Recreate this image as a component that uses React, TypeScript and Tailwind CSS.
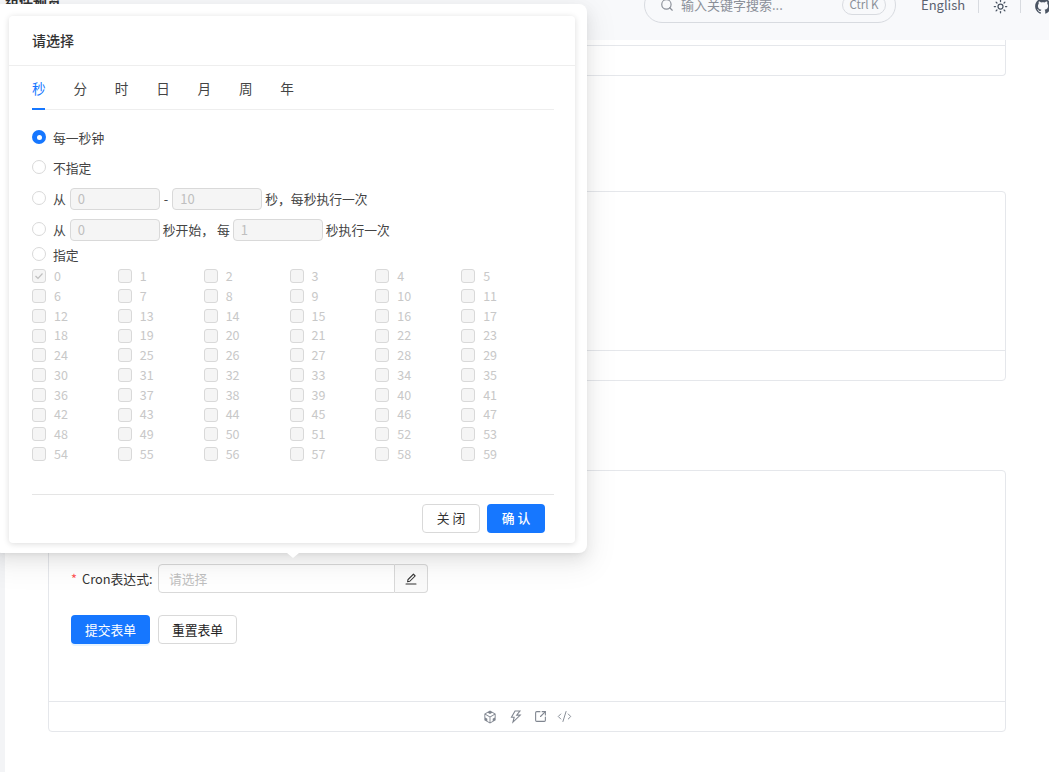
import { Search, Sun, SquareArrowOutUpRight, CodeXml } from "lucide-react";
import { AiOutlineCodeSandbox, AiOutlineThunderbolt, AiFillGithub, AiOutlineEdit } from "react-icons/ai";

const tabs = ["秒", "分", "时", "日", "月", "周", "年"];
const seconds = Array.from({ length: 60 }, (_, i) => i);

function Radio({ checked = false, lift = "-mt-[2px]" }: { checked?: boolean; lift?: string }) {
  if (checked) {
    return (
      <span className={`w-[14px] h-[14px] rounded-full bg-[#1677ff] flex items-center justify-center shrink-0 ${lift}`}>
        <span className="w-[5px] h-[5px] rounded-full bg-white" />
      </span>
    );
  }
  return <span className={`w-[14px] h-[14px] rounded-full border border-[#d9d9d9] bg-white shrink-0 ${lift}`} />;
}

function NumInput({ value }: { value: string }) {
  return (
    <span className="w-[90px] h-[22px] flex items-center px-[7px] rounded-[4px] border border-[#d9d9d9] bg-[#f5f5f5] text-[13px] text-[#bfbfbf]">
      {value}
    </span>
  );
}

function FooterIcons() {
  return (
    <div className="h-[30px] border-t border-[#e5e7eb] flex items-center justify-center gap-[10px] text-[#808690]">
      <AiOutlineCodeSandbox size={16} />
      <AiOutlineThunderbolt size={16} />
      <SquareArrowOutUpRight size={13} />
      <CodeXml size={15} strokeWidth={1.5} />
    </div>
  );
}

export default function App() {
  return (
    <div
      className="relative h-[772px] overflow-hidden bg-white text-[12.8px] text-[#333]"
      style={{ fontFamily: '"Noto Sans CJK SC", "Noto Sans", sans-serif' }}
    >
      {/* left rail */}
      <div className="absolute left-0 top-0 bottom-0 w-[5px] bg-[#f3f4f6]" />

      {/* page cards */}
      <main className="pl-[48px] w-[1006px]">
        <div className="h-[76px] border border-t-0 border-[#e5e7eb] rounded-b-[4px] flex flex-col justify-end">
          <div className="h-[30px] border-t border-[#e5e7eb]" />
        </div>
        <div className="mt-[115px] h-[190px] border border-[#e5e7eb] rounded-[4px] flex flex-col justify-end">
          <div className="h-[30px] border-t border-[#e5e7eb]" />
        </div>
        <div className="mt-[89px] h-[262px] border border-[#e5e7eb] rounded-[4px] flex flex-col">
          <div className="flex-1 pl-[22px] pt-[93px]">
            <div className="flex items-center h-[29px]">
              <span className="w-[87px] text-[#333] whitespace-nowrap">
                <span className="text-[#ff4d4f] mr-[5px]">*</span>Cron表达式:
              </span>
              <div className="flex w-[270px] h-[29px]">
                <span className="flex-1 flex items-center px-[10px] border border-[#d9d9d9] rounded-l-[4px] text-[#bfbfbf]">
                  请选择
                </span>
                <span className="w-[33px] flex items-center justify-center border border-l-0 border-[#d9d9d9] rounded-r-[4px] bg-[#fafafa] text-[#333]">
                  <AiOutlineEdit size={14} />
                </span>
              </div>
            </div>
            <div className="flex gap-[8px] mt-[22px]">
              <button className="w-[79px] h-[29px] rounded-[4px] bg-[#1677ff] text-white shadow-[0_2px_0_rgba(5,145,255,0.1)]">
                提交表单
              </button>
              <button className="w-[79px] h-[29px] rounded-[4px] border border-[#d9d9d9] bg-white text-[#222]">
                重置表单
              </button>
            </div>
          </div>
          <FooterIcons />
        </div>
      </main>

      {/* top nav */}
      <header className="absolute left-0 right-0 top-0 h-[40px] bg-[#f8f9fb] flex items-start overflow-hidden">
        <div className="pl-[5px] -mt-[9px] text-[14px] font-bold text-[#333] whitespace-nowrap w-[644px] shrink-0">组件预览</div>
        <div className="-mt-[13px] w-[252px] h-[36px] rounded-full border border-[#d8dbe0] flex items-center pl-[15px] pr-[9px] text-[#8b9099] shrink-0">
          <Search size={14} />
          <span className="ml-[7px] flex-1 text-[13px]">输入关键字搜索...</span>
          <span className="w-[44px] h-[20px] rounded-full border border-[#d8dbe0] flex items-center justify-center text-[11.5px]">
            Ctrl K
          </span>
        </div>
        <span className="ml-[25px] -mt-[5px] text-[13px] text-[#5b6270] shrink-0">English</span>
        <span className="ml-[13px] w-px h-[13px] bg-[#d8dbe0] shrink-0" />
        <Sun size={15} className="ml-[14px] mt-[-1px] text-[#4b5563] shrink-0" />
        <span className="ml-[12px] w-px h-[13px] bg-[#d8dbe0] shrink-0" />
        <AiFillGithub size={18} className="ml-[13px] -mt-[3px] text-[#4b5563] shrink-0" />
      </header>

      {/* popover */}
      <div className="absolute left-[-6px] top-[4px] w-[593px] h-[549px] bg-white rounded-[8px] shadow-[0_6px_16px_rgba(0,0,0,0.08),0_3px_6px_-4px_rgba(0,0,0,0.12),0_9px_28px_8px_rgba(0,0,0,0.05)] pl-[15px] pr-[12px] pt-[12px]">
        <div className="w-[566px] h-[527px] rounded-[4px] bg-white shadow-[0_1px_6px_rgba(0,0,0,0.14)] flex flex-col">
          <div className="h-[50px] border-b border-[#eeeeee] flex items-center pl-[23px] text-[14px] font-medium text-[#333]">
            请选择
          </div>
          <div className="px-[23px]">
            <div className="flex gap-[27.8px] h-[44px] pt-[2px] items-center border-b border-[#eeeeee] w-[522px] relative text-[13.6px] text-[#444]">
              {tabs.map((t, i) => (
                <span key={t} className={i === 0 ? "text-[#1677ff]" : ""}>
                  {t}
                </span>
              ))}
              <span className="absolute left-0 bottom-[-1px] w-[13px] h-[2px] bg-[#1677ff]" />
            </div>

            <div className="mt-[13px] flex flex-col text-[#444]">
              <div className="h-[30px] flex items-center gap-[7px]">
                <Radio checked />
                <span>每一秒钟</span>
              </div>
              <div className="h-[30px] flex items-center gap-[7px]">
                <Radio />
                <span>不指定</span>
              </div>
              <div className="h-[31px] pt-[5px] pb-[4px] flex items-center">
                <Radio lift="-mt-[3px]" />
                <span className="ml-[7px]">从</span>
                <span className="ml-[4px]"><NumInput value="0" /></span>
                <span className="mx-[4px]">-</span>
                <NumInput value="10" />
                <span className="ml-[3px]">秒，每秒执行一次</span>
              </div>
              <div className="h-[29px] pt-[5px] pb-[2px] flex items-center">
                <Radio lift="-mt-[3px]" />
                <span className="ml-[7px]">从</span>
                <span className="ml-[4px]"><NumInput value="0" /></span>
                <span className="ml-[3px]">秒开始，</span>
                <span className="ml-[3px]">每</span>
                <span className="ml-[3px]"><NumInput value="1" /></span>
                <span className="ml-[3px]">秒执行一次</span>
              </div>
              <div className="h-[22px] pt-[2px] flex items-center gap-[7px]">
                <Radio />
                <span>指定</span>
              </div>
            </div>

            <div className="grid grid-cols-6 w-[515px] mt-[1.5px]">
              {seconds.map((n) => (
                <div key={n} className="h-[19.75px] flex items-center text-[12.5px] text-[#c8c8c8]">
                  <span className="w-[14px] h-[14px] rounded-[3px] border border-[#d9d9d9] bg-[#f5f5f5] flex items-center justify-center">
                    {n === 0 && (
                      <svg width="10" height="10" viewBox="0 0 10 10" fill="none" stroke="#bfbfbf" strokeWidth="1.2">
                        <path d="M1.5 5l2.5 2.5 4.5-5" />
                      </svg>
                    )}
                  </span>
                  <span className="ml-[8px]">{n}</span>
                </div>
              ))}
            </div>

            <div className="mt-[29.5px] border-t border-[#e5e5e5] w-[522px] pt-[9px] pr-[9px] flex justify-end gap-[7px]">
              <button className="w-[58px] h-[29px] pl-[3px] rounded-[4px] border border-[#d9d9d9] bg-white tracking-[3px] text-[#333]">
                关闭
              </button>
              <button className="w-[58px] h-[29px] pl-[3px] rounded-[4px] bg-[#1677ff] text-white font-medium tracking-[3px]">
                确认
              </button>
            </div>
          </div>
        </div>
        {/* arrow */}
        <span className="absolute left-[293px] bottom-[-5px] w-0 h-0 border-l-[6px] border-r-[6px] border-t-[5px] border-l-transparent border-r-transparent border-t-white" />
      </div>
    </div>
  );
}
